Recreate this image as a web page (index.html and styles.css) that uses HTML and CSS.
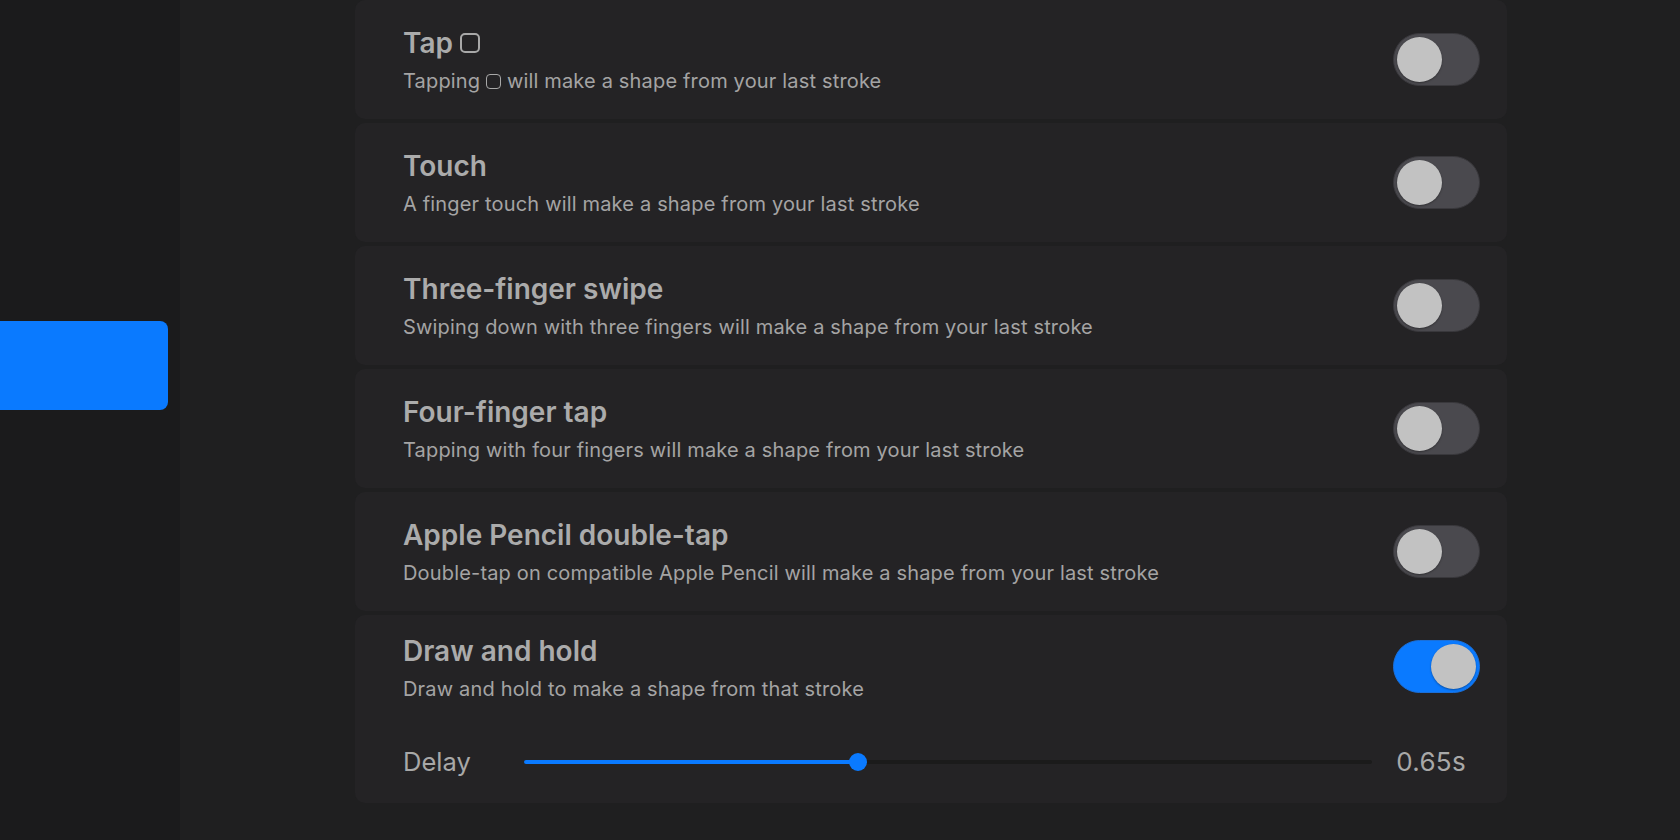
FILE: index.html
```html
<!DOCTYPE html>
<html>
<head>
<meta charset="utf-8">
<link rel="stylesheet" href="styles.css">
</head>
<body>
<div class="app">
  <aside class="sidebar">
    <div class="side-btn"></div>
  </aside>
  <main class="main">
    <div class="list">
      <section class="card">
        <div class="row">
          <div class="text">
            <div class="title">Tap <span class="sq sq-lg"></span></div>
            <div class="desc">Tapping <span class="sq sq-sm"></span> will make a shape from your last stroke</div>
          </div>
          <div class="toggle"><span class="knob"></span></div>
        </div>
      </section>
      <section class="card">
        <div class="row">
          <div class="text">
            <div class="title">Touch</div>
            <div class="desc">A finger touch will make a shape from your last stroke</div>
          </div>
          <div class="toggle"><span class="knob"></span></div>
        </div>
      </section>
      <section class="card">
        <div class="row">
          <div class="text">
            <div class="title">Three-finger swipe</div>
            <div class="desc">Swiping down with three fingers will make a shape from your last stroke</div>
          </div>
          <div class="toggle"><span class="knob"></span></div>
        </div>
      </section>
      <section class="card">
        <div class="row">
          <div class="text">
            <div class="title">Four-finger tap</div>
            <div class="desc">Tapping with four fingers will make a shape from your last stroke</div>
          </div>
          <div class="toggle"><span class="knob"></span></div>
        </div>
      </section>
      <section class="card">
        <div class="row">
          <div class="text">
            <div class="title">Apple Pencil double-tap</div>
            <div class="desc">Double-tap on compatible Apple Pencil will make a shape from your last stroke</div>
          </div>
          <div class="toggle"><span class="knob"></span></div>
        </div>
      </section>
      <section class="card card-tall">
        <div class="row row-top">
          <div class="text">
            <div class="title">Draw and hold</div>
            <div class="desc">Draw and hold to make a shape from that stroke</div>
          </div>
          <div class="toggle on"><span class="knob"></span></div>
        </div>
        <div class="slider-row">
          <div class="slider-label">Delay</div>
          <div class="slider">
            <div class="slider-fill" style="width: 39.4%"></div>
            <div class="slider-thumb"></div>
          </div>
          <div class="slider-value">0.65s</div>
        </div>
      </section>
    </div>
  </main>
</div>
</body>
</html>
```

FILE: styles.css
```css
* { box-sizing: border-box; }

html, body {
  margin: 0;
  padding: 0;
  height: 840px;
  overflow: hidden;
  background: #1f1f20;
  font-family: Inter, "Noto Sans", "Liberation Sans", sans-serif;
}

.app {
  display: flex;
  height: 840px;
}

.sidebar {
  width: 180px;
  flex: none;
  background: #1b1b1c;
  padding-top: 321px;
}

.side-btn {
  width: 168px;
  height: 89px;
  background: #0a7aff;
  border-radius: 0 8px 8px 0;
}

.main {
  flex: 1;
  background: #1f1f20;
  padding-left: 175px;
}

.list {
  width: 1152px;
  display: flex;
  flex-direction: column;
  gap: 4px;
}

.card {
  background: #242325;
  border-radius: 10px;
  height: 119px;
  padding: 0 27px 0 48px;
  display: flex;
  flex-direction: column;
  justify-content: center;
}

.card-tall {
  height: 188px;
  justify-content: flex-start;
  padding-top: 19px;
}

.row {
  display: flex;
  align-items: center;
  justify-content: space-between;
}

.row-top .toggle {
  margin-top: -3px;
}

.text {
  display: flex;
  flex-direction: column;
  gap: 8px;
}

.title {
  font-size: 28px;
  line-height: 34px;
  font-weight: 600;
  color: #ababab;
  letter-spacing: 0;
  display: flex;
  align-items: center;
  gap: 7px;
}

.desc {
  font-size: 20px;
  line-height: 26px;
  font-weight: 400;
  color: #a4a4a4;
  letter-spacing: 0.17px;
}

.sq {
  display: inline-block;
  border-style: solid;
  border-color: #a8a8a8;
}

.sq-lg {
  width: 20px;
  height: 20px;
  border-width: 2px;
  border-radius: 5px;
}

.sq-sm {
  width: 15px;
  height: 15px;
  border-width: 1.5px;
  border-radius: 4px;
  vertical-align: -1px;
}

.toggle {
  width: 87px;
  height: 53px;
  border-radius: 27px;
  background: #4a494e;
  border: 1px solid #39383c;
  position: relative;
  flex: none;
}

.knob {
  position: absolute;
  top: 3px;
  left: 3px;
  width: 45px;
  height: 45px;
  border-radius: 50%;
  background: #c2c2c2;
  box-shadow: 0 1px 2px rgba(0,0,0,0.35);
}

.toggle.on {
  background: #0a7aff;
  border-color: #1b6fd8;
}

.toggle.on .knob {
  left: auto;
  right: 3px;
}

.slider-row {
  display: flex;
  align-items: center;
  margin-top: 44px;
  padding-right: 14px;
  height: 32px;
}

.slider-label {
  width: 121px;
  font-size: 25.5px;
  line-height: 32px;
  color: #a8a8a8;
}

.slider {
  flex: 1;
  height: 4px;
  background: #1b1b1b;
  border-radius: 2px;
  position: relative;
}

.slider-fill {
  height: 4px;
  background: #0a7aff;
  border-radius: 2px;
}

.slider-thumb {
  position: absolute;
  left: 39.4%;
  top: 50%;
  width: 18px;
  height: 18px;
  margin: -9px 0 0 -9px;
  border-radius: 50%;
  background: #0a7aff;
}

.slider-value {
  margin-left: 24px;
  font-size: 26px;
  line-height: 32px;
  color: #a8a8a8;
  letter-spacing: 0.3px;
}
```
